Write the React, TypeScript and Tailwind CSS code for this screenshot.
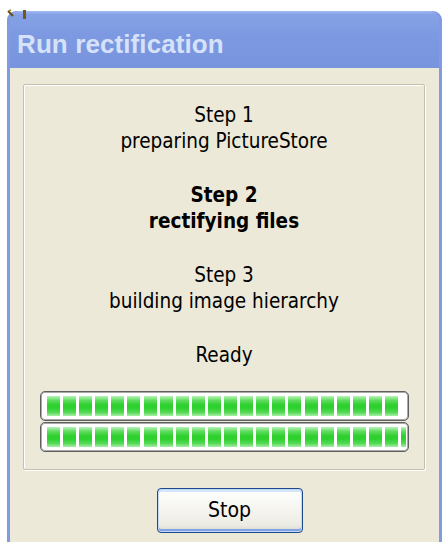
import React from "react";

const body = {
  fontFamily: '"DejaVu Sans Condensed", "Liberation Sans", sans-serif',
};

function Chunks({ count }: { count: number }) {
  return (
    <div className="flex gap-[3.1px] h-full">
      {Array.from({ length: count }).map((_, i) => (
        <div
          key={i}
          className="w-[13px] shrink-0 h-full bg-[linear-gradient(to_bottom,#b9f3b9_0%,#5fdc5f_22%,#2ed02e_45%,#2ed02e_60%,#55d955_82%,#a8efa8_100%)]"
        />
      ))}
    </div>
  );
}

function ProgressBar({ count }: { count: number }) {
  return (
    <div className="h-[30px] w-[369px] rounded-[5px] border border-[#5f5f5f] bg-white shadow-[inset_0_0_0_1px_#a9a9a9] pl-[6px] pr-[2px] py-[4px] overflow-hidden">
      <div className="h-full overflow-hidden">
        <Chunks count={count} />
      </div>
    </div>
  );
}

export default function App() {
  return (
    <div className="relative w-[445px] h-[542px] overflow-hidden bg-white pt-[11px] pl-[7px]">
      {/* corner of a neighbouring window's icon */}
      <svg className="absolute left-[7px] top-[9px]" width="22" height="12" viewBox="0 0 22 12">
        <path d="M1 2 L6 7" stroke="#6b4a12" strokeWidth="2" />
        <path d="M2 2 L4 1" stroke="#a07a2a" strokeWidth="1.5" />
        <rect x="16" y="1" width="3" height="9" fill="#7a5616" />
      </svg>

      <div className="w-[435px] h-[560px] flex flex-col rounded-t-[9px] bg-[#7f9be2] px-[3px]">
        {/* title bar */}
        <div className="h-[57px] shrink-0 flex items-center pl-[7px] rounded-t-[9px] bg-[linear-gradient(to_bottom,#a2baf0_0%,#86a2e6_6%,#7d99e1_40%,#7894de_100%)]">
          <span
            className="text-[26px] font-bold text-[#d5e2f9] leading-none mt-[8px] tracking-[0.1px]"
            style={{ fontFamily: '"Liberation Sans", "DejaVu Sans", sans-serif' }}
          >
            Run rectification
          </span>
        </div>

        {/* client area */}
        <div
          className="flex-1 bg-[#ece9d8] pt-[16px] pl-[13px] pr-[12px] flex flex-col items-start text-black"
          style={body}
        >
          <div className="w-[402px] h-[386px] rounded-[2px] border border-[#c3c0ae] shadow-[inset_1px_1px_0_#ffffff,1px_1px_0_#ffffff] flex flex-col items-center">
            <div className="flex flex-col items-center text-[20.5px] leading-[26px] pt-[17px] gap-[28px]">
              <div className="flex flex-col items-center">
                <span>Step 1</span>
                <span>preparing PictureStore</span>
              </div>
              <div className="flex flex-col items-center font-bold">
                <span>Step 2</span>
                <span>rectifying files</span>
              </div>
              <div className="flex flex-col items-center">
                <span>Step 3</span>
                <span>building image hierarchy</span>
              </div>
              <div>Ready</div>
            </div>

            <div className="mt-[23px] flex flex-col gap-[1px] pl-[1px]">
              <ProgressBar count={22} />
              <ProgressBar count={23} />
            </div>
          </div>

          <div className="w-[402px] flex justify-center mt-[18px] pl-[11px]">
            <button
              className="w-[146px] h-[45px] rounded-[4px] border border-[#1c4a8c] bg-[linear-gradient(to_bottom,#ffffff_0%,#f6f5f0_45%,#ecebe3_85%,#d8d5c8_100%)] shadow-[inset_0_0_0_1px_#c4d9f6,inset_0_-2px_0_1px_#7ea4e6,inset_0_2px_0_1px_#d5e5fb] text-[21px] leading-none text-black"
              style={body}
            >
              Stop
            </button>
          </div>
        </div>
      </div>
    </div>
  );
}
